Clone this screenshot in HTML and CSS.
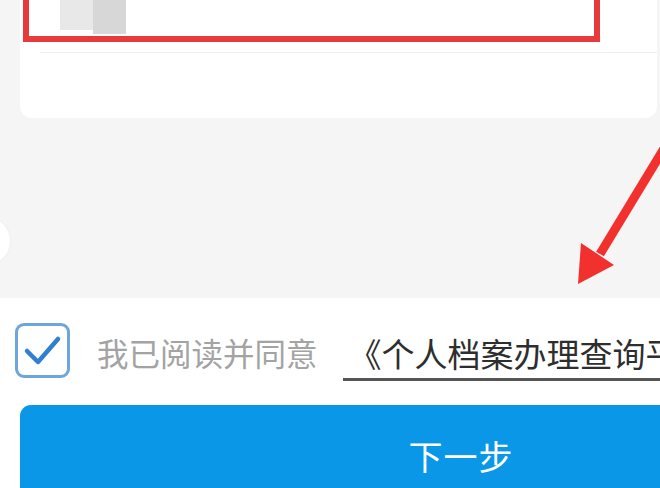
FILE: index.html
```html
<!DOCTYPE html>
<html lang="zh-CN">
<head>
<meta charset="utf-8">
<title>个人档案办理查询</title>
<link rel="stylesheet" href="styles.css">
</head>
<body>
<div class="page">
  <section class="card">
    <div class="redbox">
      <div class="mosaic"><span class="tile light"></span><span class="tile dark"></span></div>
    </div>
    <div class="divider"></div>
  </section>
  <section class="spacer">
    <span class="notch"></span>
  </section>
  <section class="agree">
    <div class="agree-row">
      <span class="checkbox">
        <svg viewBox="0 0 55 55" width="55" height="55" aria-hidden="true">
          <path d="M12 28 L23 39 L43 16" fill="none" stroke="#2f80d2" stroke-width="4.5" stroke-linecap="round" stroke-linejoin="round"/>
        </svg>
      </span>
      <span class="agree-text">我已阅读并同意</span>
      <span class="agree-link">《个人档案办理查询平台服务协议》</span>
    </div>
    <button class="next-btn">下一步</button>
  </section>
  <svg class="arrow" viewBox="0 0 660 488" width="660" height="488" aria-hidden="true">
    <line x1="668" y1="142" x2="600" y2="254" stroke="#f2302e" stroke-width="9" stroke-linecap="butt"/>
    <polygon points="578,284 581,243 614,265" fill="#f2302e"/>
  </svg>
</div>
</body>
</html>
```

FILE: styles.css
```css
html, body {
  margin: 0;
  padding: 0;
}
body {
  width: 660px;
  height: 488px;
  overflow: hidden;
  background: #f5f5f5;
  font-family: "Noto Sans CJK SC", "Noto Sans", sans-serif;
}
.page {
  position: relative;
  width: 660px;
  height: 488px;
  overflow: hidden;
}
.card {
  margin-left: 20px;
  width: 637px;
  height: 118px;
  background: #ffffff;
  border-radius: 0 0 12px 12px;
  box-sizing: border-box;
}
.redbox {
  margin-left: 3px;
  width: 577px;
  height: 42px;
  box-sizing: border-box;
  border: 6px solid #e8393d;
  border-top: none;
  display: flex;
}
.mosaic {
  margin-left: 31px;
  display: flex;
  align-items: flex-start;
}
.tile {
  display: block;
  width: 33px;
}
.tile.light {
  height: 30px;
  background: #e8e8e8;
}
.tile.dark {
  height: 34px;
  background: #d7d7d7;
}
.divider {
  margin-top: 10px;
  margin-left: 20px;
  height: 1px;
  background: #eeeeee;
}
.spacer {
  position: relative;
  height: 180px;
}
.notch {
  position: absolute;
  left: -38px;
  top: 99px;
  width: 48px;
  height: 48px;
  border-radius: 50%;
  background: #ffffff;
  box-shadow: 0 0 3px rgba(0, 0, 0, 0.05);
}
.agree {
  background: #ffffff;
  height: 190px;
  padding-top: 25px;
  box-sizing: border-box;
}
.agree-row {
  display: flex;
  align-items: flex-start;
  padding-left: 15px;
  white-space: nowrap;
}
.checkbox {
  width: 55px;
  height: 55px;
  box-sizing: border-box;
  border: 3px solid #6ea5da;
  border-radius: 9px;
  display: flex;
  align-items: center;
  justify-content: center;
  flex-shrink: 0;
}
.checkbox svg {
  display: block;
  margin: -3px;
}
.agree-text {
  margin-left: 27px;
  margin-top: 11px;
  font-size: 31.5px;
  line-height: 36px;
  color: #a3a3a3;
}
.agree-link {
  margin-left: 25px;
  margin-top: 12px;
  padding-left: 6px;
  font-size: 33px;
  line-height: 36px;
  color: #2e2e2e;
  padding-bottom: 7px;
  border-bottom: 3px solid #555555;
  flex-shrink: 0;
}
.next-btn {
  display: block;
  margin-top: 24px;
  margin-left: 20px;
  width: 882px;
  height: 102px;
  border: none;
  border-radius: 11px;
  background: #0a97e8;
  color: #ffffff;
  font-family: "Noto Sans CJK SC", "Noto Sans", sans-serif;
  font-size: 34px;
  line-height: 98px;
  padding: 0;
  text-align: center;
  letter-spacing: 1px;
}
.arrow {
  position: absolute;
  left: 0;
  top: 0;
  pointer-events: none;
}
```
